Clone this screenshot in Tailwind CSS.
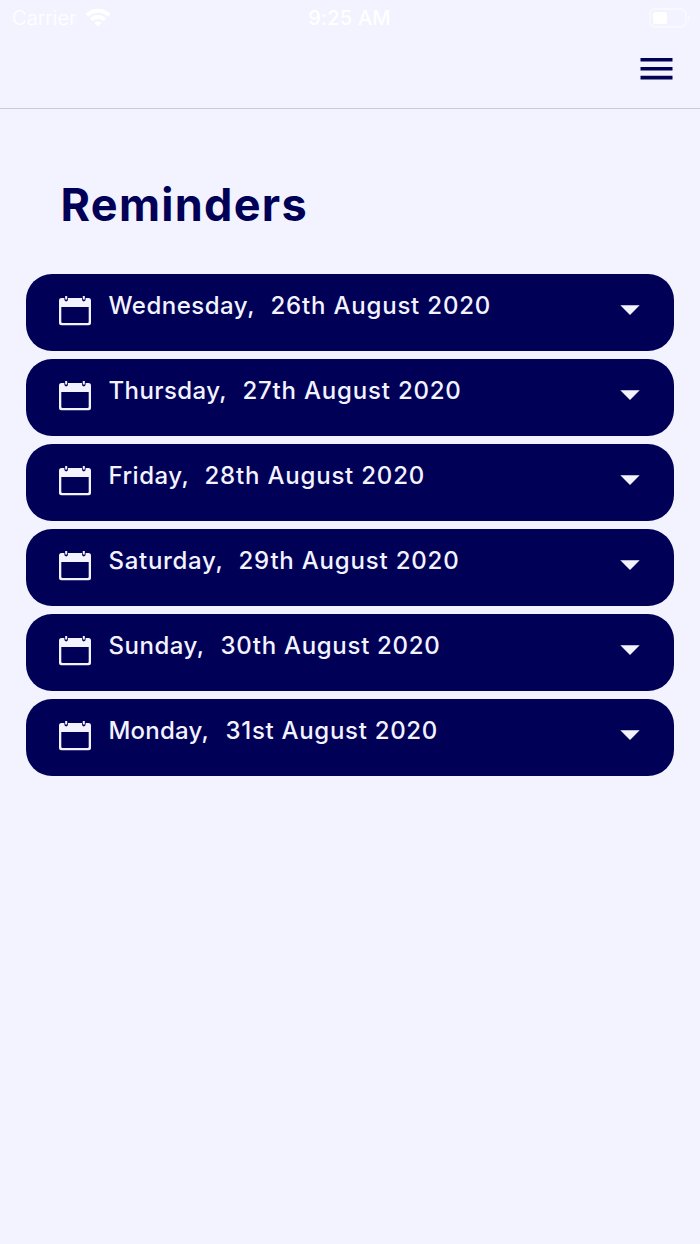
<!DOCTYPE html>
<html lang="en">
  <head>
    <meta charset="UTF-8" />
    <meta name="viewport" content="width=device-width, initial-scale=1.0" />
    <title>Reminders</title>
    <script src="https://cdn.jsdelivr.net/npm/@tailwindcss/browser@4"></script>
  </head>
  <body class="min-h-screen bg-[#f3f3ff] font-['Inter',sans-serif] text-[#000057]">
    <svg class="hidden">
      <symbol id="calendar" viewBox="0 0 32 30">
        <path
          fill="currentColor"
          fill-rule="evenodd"
          d="M2.5 2h2.9v1.6a1.8 1.8 0 0 0 3.6 0V2h14v1.6a1.8 1.8 0 0 0 3.6 0V2h2.9A2.5 2.5 0 0 1 32 4.5v22.3a2.5 2.5 0 0 1-2.5 2.5h-27A2.5 2.5 0 0 1 0 26.8V4.5A2.5 2.5 0 0 1 2.5 2ZM2.3 11v14.7a1.3 1.3 0 0 0 1.3 1.3h24.8a1.3 1.3 0 0 0 1.3-1.3V11Z"
        />
        <path fill="currentColor" d="M6.2 0h2v3.4h-2zM23.8 0h2v3.4h-2z" />
      </symbol>
      <symbol id="caret" viewBox="0 0 20 10">
        <path fill="currentColor" d="M.3.3h19.4L10 10z" />
      </symbol>
    </svg>

    <div class="grid h-9 grid-cols-3 items-center pl-3 pr-[9px] text-xl text-white">
      <div class="flex items-center gap-[9px]">
        <span class="font-light tracking-[0.1px]">Carrier</span>
        <svg class="-mt-0.5 h-[19px] w-[26px]" viewBox="0 0 26 19" fill="none" stroke="currentColor" stroke-width="4">
          <path d="M1.8 7.2a16 16 0 0 1 22.4 0" />
          <path d="M6.2 11.8a9.7 9.7 0 0 1 13.6 0" />
          <path fill="currentColor" stroke="none" d="M13 18.6l-3.8-3.8a5.4 5.4 0 0 1 7.6 0z" />
        </svg>
      </div>
      <span class="-ml-1 text-center font-medium tracking-[0.2px]">9:25 AM</span>
      <svg class="h-5 w-[42px] justify-self-end" viewBox="0 0 42 20">
        <rect x="1" y="1" width="36" height="18" rx="5" fill="none" stroke="#fff" stroke-opacity=".4" stroke-width="1.8" />
        <rect x="4" y="4" width="14" height="12" rx="2.5" fill="#fff" />
        <path d="M39 6.5a4 4 0 0 1 0 7z" fill="#fff" fill-opacity=".4" />
      </svg>
    </div>

    <header class="flex h-[73px] items-start justify-end border-b border-[#cacad6] pr-7 pt-[22px]">
      <button aria-label="Menu">
        <svg class="h-[22px] w-8 overflow-visible" viewBox="0 0 32 22" fill="currentColor">
          <path d="M.5 0h32v3.6H.5zM.5 9h32v3.6H.5zM.5 17.8h32v3.6H.5z" />
        </svg>
      </button>
    </header>

    <main class="pl-[25.5px] pr-[26px] pt-[70px]">
      <h1 class="pl-[35px] text-[45px] leading-[52px] font-bold tracking-[1.3px]">Reminders</h1>

      <ul class="mt-[43px] space-y-[8.5px] text-2xl leading-8 font-medium text-[#f3f3ff]">
        <li class="flex h-[76.5px] rounded-[26px] bg-[#000057] pl-[33.5px] pr-[34.5px]">
          <svg class="mt-[22px] mr-[17.5px] h-[30px] w-8"><use href="#calendar" /></svg>
          <span class="mt-4 w-[162px] tracking-[0.5px]">Wednesday,</span>
          <span class="mt-4 tracking-[0.8px]">26th August 2020</span>
          <svg class="mt-[31px] ml-auto h-2.5 w-5"><use href="#caret" /></svg>
        </li>
        <li class="flex h-[76.5px] rounded-[26px] bg-[#000057] pl-[33.5px] pr-[34.5px]">
          <svg class="mt-[22px] mr-[17.5px] h-[30px] w-8"><use href="#calendar" /></svg>
          <span class="mt-4 w-[134px] tracking-[0.4px]">Thursday,</span>
          <span class="mt-4 tracking-[0.8px]">27th August 2020</span>
          <svg class="mt-[31px] ml-auto h-2.5 w-5"><use href="#caret" /></svg>
        </li>
        <li class="flex h-[76.5px] rounded-[26px] bg-[#000057] pl-[33.5px] pr-[34.5px]">
          <svg class="mt-[22px] mr-[17.5px] h-[30px] w-8"><use href="#calendar" /></svg>
          <span class="mt-4 w-[96px] tracking-[0.5px]">Friday,</span>
          <span class="mt-4 tracking-[0.8px]">28th August 2020</span>
          <svg class="mt-[31px] ml-auto h-2.5 w-5"><use href="#caret" /></svg>
        </li>
        <li class="flex h-[76.5px] rounded-[26px] bg-[#000057] pl-[33.5px] pr-[34.5px]">
          <svg class="mt-[22px] mr-[17.5px] h-[30px] w-8"><use href="#calendar" /></svg>
          <span class="mt-4 w-[130px] tracking-[0.7px]">Saturday,</span>
          <span class="mt-4 tracking-[0.8px]">29th August 2020</span>
          <svg class="mt-[31px] ml-auto h-2.5 w-5"><use href="#caret" /></svg>
        </li>
        <li class="flex h-[76.5px] rounded-[26px] bg-[#000057] pl-[33.5px] pr-[34.5px]">
          <svg class="mt-[22px] mr-[17.5px] h-[30px] w-8"><use href="#calendar" /></svg>
          <span class="mt-4 w-[112px] tracking-[0.5px]">Sunday,</span>
          <span class="mt-4 tracking-[0.7px]">30th August 2020</span>
          <svg class="mt-[31px] ml-auto h-2.5 w-5"><use href="#caret" /></svg>
        </li>
        <li class="flex h-[76.5px] rounded-[26px] bg-[#000057] pl-[33.5px] pr-[34.5px]">
          <svg class="mt-[22px] mr-[17.5px] h-[30px] w-8"><use href="#calendar" /></svg>
          <span class="mt-4 w-[117px] tracking-[0.2px]">Monday,</span>
          <span class="mt-4 tracking-[0.7px]">31st August 2020</span>
          <svg class="mt-[31px] ml-auto h-2.5 w-5"><use href="#caret" /></svg>
        </li>
      </ul>
    </main>
  </body>
</html>
